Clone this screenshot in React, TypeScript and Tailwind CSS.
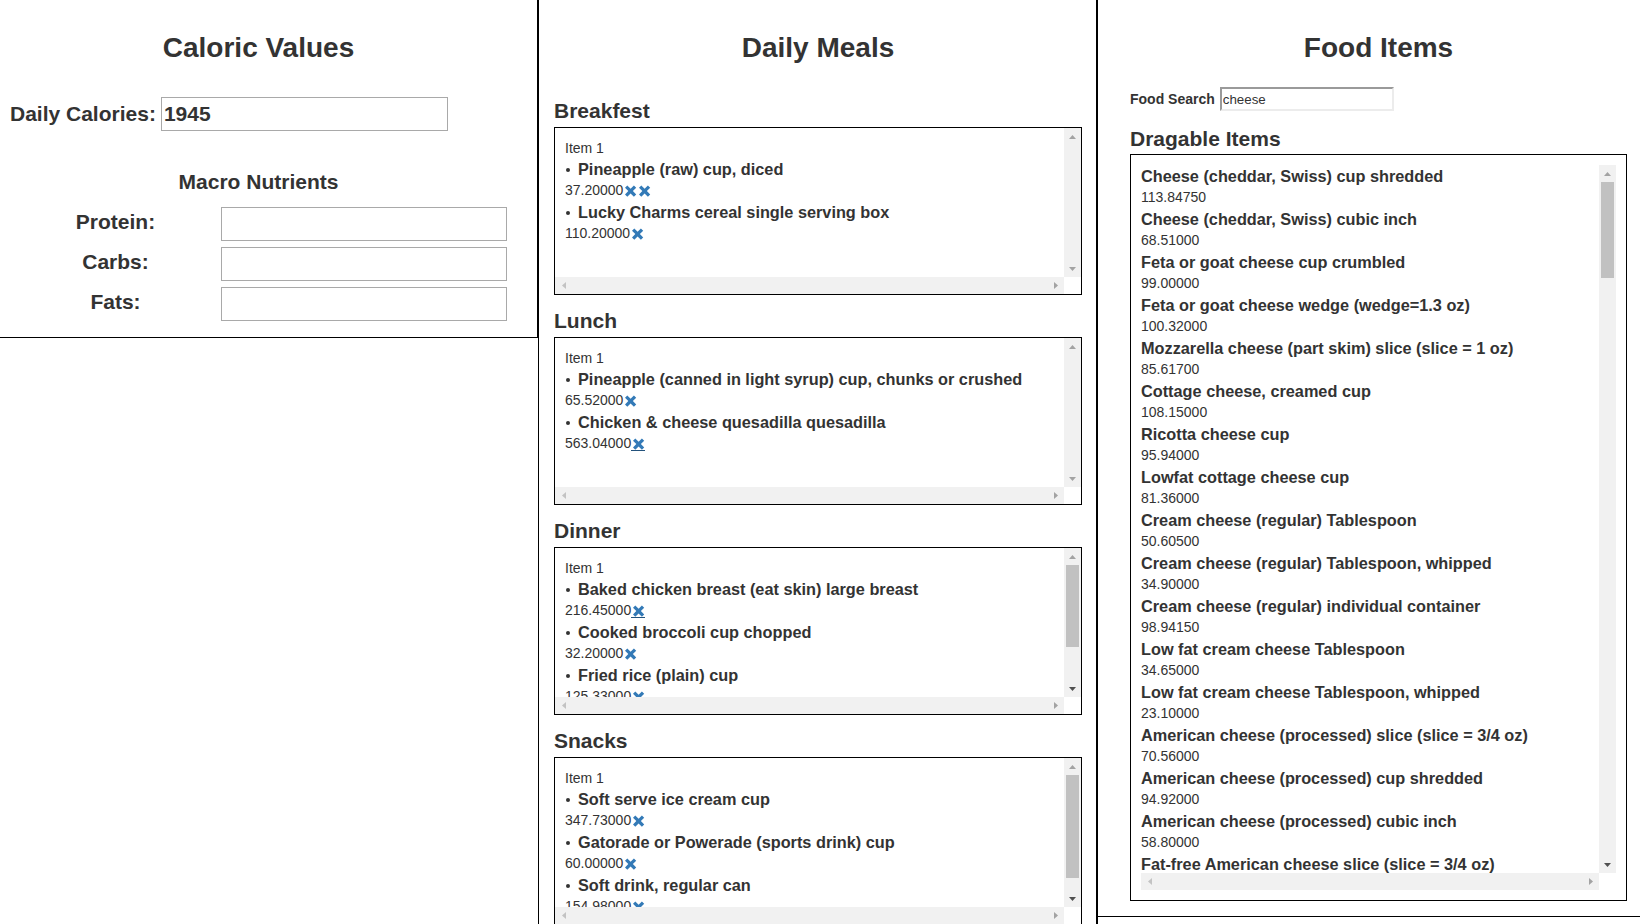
import React from 'react'

// Meal plan data shown in the middle column
const MEALS = [
  {
    name: 'Breakfest',
    thumb: null as null | { h: number },
    items: [
      { food: 'Pineapple (raw) cup, diced', cal: '37.20000', xs: 2, under: false },
      { food: 'Lucky Charms cereal single serving box', cal: '110.20000', xs: 1, under: false },
    ],
  },
  {
    name: 'Lunch',
    thumb: null,
    items: [
      { food: 'Pineapple (canned in light syrup) cup, chunks or crushed', cal: '65.52000', xs: 1, under: false },
      { food: 'Chicken & cheese quesadilla quesadilla', cal: '563.04000', xs: 1, under: true },
    ],
  },
  {
    name: 'Dinner',
    thumb: { h: 82 },
    items: [
      { food: 'Baked chicken breast (eat skin) large breast', cal: '216.45000', xs: 1, under: true },
      { food: 'Cooked broccoli cup chopped', cal: '32.20000', xs: 1, under: false },
      { food: 'Fried rice (plain) cup', cal: '125.33000', xs: 1, under: false },
    ],
  },
  {
    name: 'Snacks',
    thumb: { h: 103 },
    items: [
      { food: 'Soft serve ice cream cup', cal: '347.73000', xs: 1, under: false },
      { food: 'Gatorade or Powerade (sports drink) cup', cal: '60.00000', xs: 1, under: false },
      { food: 'Soft drink, regular can', cal: '154.98000', xs: 1, under: false },
    ],
  },
]

const FOODS = [
  ['Cheese (cheddar, Swiss) cup shredded', '113.84750'],
  ['Cheese (cheddar, Swiss) cubic inch', '68.51000'],
  ['Feta or goat cheese cup crumbled', '99.00000'],
  ['Feta or goat cheese wedge (wedge=1.3 oz)', '100.32000'],
  ['Mozzarella cheese (part skim) slice (slice = 1 oz)', '85.61700'],
  ['Cottage cheese, creamed cup', '108.15000'],
  ['Ricotta cheese cup', '95.94000'],
  ['Lowfat cottage cheese cup', '81.36000'],
  ['Cream cheese (regular) Tablespoon', '50.60500'],
  ['Cream cheese (regular) Tablespoon, whipped', '34.90000'],
  ['Cream cheese (regular) individual container', '98.94150'],
  ['Low fat cream cheese Tablespoon', '34.65000'],
  ['Low fat cream cheese Tablespoon, whipped', '23.10000'],
  ['American cheese (processed) slice (slice = 3/4 oz)', '70.56000'],
  ['American cheese (processed) cup shredded', '94.92000'],
  ['American cheese (processed) cubic inch', '58.80000'],
  ['Fat-free American cheese slice (slice = 3/4 oz)', '31.92000'],
]

function Arrow({ dir, color }: { dir: 'up' | 'down' | 'left' | 'right'; color: string }) {
  const pts = {
    up: '0,4 3.5,0 7,4',
    down: '0,0 3.5,4 7,0',
    left: '4,0 0,3.5 4,7',
    right: '0,0 4,3.5 0,7',
  }[dir]
  const vert = dir === 'up' || dir === 'down'
  return (
    <svg width={vert ? 7 : 4} height={vert ? 4 : 7} viewBox={vert ? '0 0 7 4' : '0 0 4 7'}>
      <polygon points={pts} fill={color} />
    </svg>
  )
}

function VBar({ thumb }: { thumb: null | { h: number } }) {
  return (
    <div className="w-[17px] h-full bg-[#f1f1f1] flex flex-col flex-shrink-0">
      <div className="h-[17px] flex items-center justify-center">
        <Arrow dir="up" color="#a3a3a3" />
      </div>
      <div className="flex-1">
        {thumb && <div className="mx-[2px] bg-[#c1c1c1]" style={{ height: thumb.h }} />}
      </div>
      <div className="h-[17px] flex items-center justify-center">
        <Arrow dir="down" color={thumb ? '#505050' : '#a3a3a3'} />
      </div>
    </div>
  )
}

function HBar() {
  return (
    <div className="flex h-[17px]">
      <div className="flex-1 bg-[#f1f1f1] flex items-center justify-between">
        <div className="w-[17px] flex justify-center"><Arrow dir="left" color="#c3c3c3" /></div>
        <div className="w-[17px] flex justify-center"><Arrow dir="right" color="#a3a3a3" /></div>
      </div>
      <div className="w-[17px] bg-white" />
    </div>
  )
}

function XIcon({ underline }: { underline?: boolean }) {
  return (
    <span className="relative inline-flex w-[14px] h-[21px] items-center">
      <svg width="14" height="12" viewBox="0 0 14 12">
        <path d="M4.3 0.5 L7.6 3.8 L10.9 0.5 L13.2 2.8 L9.9 6.1 L13.2 9.4 L10.9 11.7 L7.6 8.4 L4.3 11.7 L2 9.4 L5.3 6.1 L2 2.8 Z" fill="#337ab7" />
      </svg>
      {underline && <span className="absolute left-0 right-0 top-[17px] h-px bg-[#23527c]" />}
    </span>
  )
}

function MealBox({ meal }: { meal: (typeof MEALS)[number] }) {
  return (
    <div className="pt-[14px]">
      <h3 className="mb-[5px] text-[21px] leading-[23px] font-bold">{meal.name}</h3>
      <div className="h-[168px] border border-black flex flex-col">
        <div className="flex h-[149px]">
          <div className="flex-1 overflow-hidden pl-[10px] pt-[10px]">
            <div className="h-[20px] leading-[20px] text-[14px]">Item 1</div>
            {meal.items.map((it, i) => (
              <div key={i}>
                <div className="flex items-center h-[22px] text-[16.3px] font-bold whitespace-nowrap">
                  <span className="w-[4px] h-[4px] mt-[1px] ml-[1px] mr-[8px] bg-[#333] rounded-full" />
                  {it.food}
                </div>
                <div className="flex items-center h-[21px] text-[14px]">
                  {it.cal}
                  {Array.from({ length: it.xs }).map((_, k) => (
                    <XIcon key={k} underline={it.under} />
                  ))}
                </div>
              </div>
            ))}
          </div>
          <VBar thumb={meal.thumb} />
        </div>
        <HBar />
      </div>
    </div>
  )
}

export default function App() {
  return (
    <div className="flex items-start w-[1640px] h-[924px] overflow-hidden bg-white text-[#333] font-['Liberation_Sans',Arial,Helvetica,sans-serif]">
      {/* Caloric values */}
      <div className="w-[538px] h-[338px] border-r border-b border-black pl-[10px] pt-[32px] flex-shrink-0">
        <div className="w-[497px]">
          <h2 className="text-[28px] leading-[31px] font-bold text-center">Caloric Values</h2>
          <div className="mt-[34px] flex items-center h-[34px]">
            <label className="text-[21px] font-bold">Daily Calories:</label>
            <input
              readOnly
              value="1945"
              className="ml-[5px] w-[287px] h-[34px] border border-[#a9a9a9] px-[2px] text-[21px] font-bold outline-none"
            />
          </div>
          <h3 className="mt-[39px] text-[21px] leading-[23px] font-bold text-center">Macro Nutrients</h3>
          <div className="mt-[14px] flex flex-col gap-[6px]">
            {['Protein:', 'Carbs:', 'Fats:'].map((l) => (
              <div key={l} className="flex items-center h-[34px]">
                <label className="w-[211px] text-center text-[21px] font-bold pb-[4px]">{l}</label>
                <input readOnly className="w-[286px] h-[34px] border border-[#a9a9a9] outline-none" />
              </div>
            ))}
          </div>
        </div>
      </div>

      {/* Daily meals */}
      <div className="w-[560px] h-[924px] border-l border-r-2 border-black pl-[15px] pr-[14px] pt-[32px] flex-shrink-0">
        <h2 className="text-[28px] leading-[31px] font-bold text-center">Daily Meals</h2>
        <div className="pt-[22px]">
          {MEALS.map((m) => (
            <MealBox key={m.name} meal={m} />
          ))}
        </div>
      </div>

      {/* Food items */}
      <div className="w-[542px] h-[917px] border-b border-black pl-[32px] pt-[32px] flex-shrink-0">
        <div className="w-[497px]">
          <h2 className="text-[28px] leading-[31px] font-bold text-center">Food Items</h2>
          <div className="mt-[24px] flex items-center h-[24px]">
            <label className="text-[14px] font-bold">Food Search</label>
            <input
              readOnly
              value="cheese"
              className="ml-[5px] w-[174px] h-[24px] border-2 border-t-[#9a9a9a] border-l-[#9a9a9a] border-b-[#ececec] border-r-[#ececec] px-[1px] text-[13.33px] outline-none"
            />
          </div>
          <h3 className="mt-[16px] mb-[4px] text-[21px] leading-[23px] font-bold">Dragable Items</h3>
          <div className="h-[747px] border border-black p-[10px]">
            <div className="flex flex-col h-full">
              <div className="flex flex-1 min-h-0">
                <div className="flex-1 overflow-hidden">
                  {FOODS.map(([f, c]) => (
                    <div key={f}>
                      <div className="h-[22px] leading-[22px] text-[16.3px] font-bold whitespace-nowrap">{f}</div>
                      <div className="h-[21px] leading-[21px] text-[14px]">{c}</div>
                    </div>
                  ))}
                </div>
                <VBar thumb={{ h: 96 }} />
              </div>
              <HBar />
            </div>
          </div>
        </div>
      </div>
    </div>
  )
}
